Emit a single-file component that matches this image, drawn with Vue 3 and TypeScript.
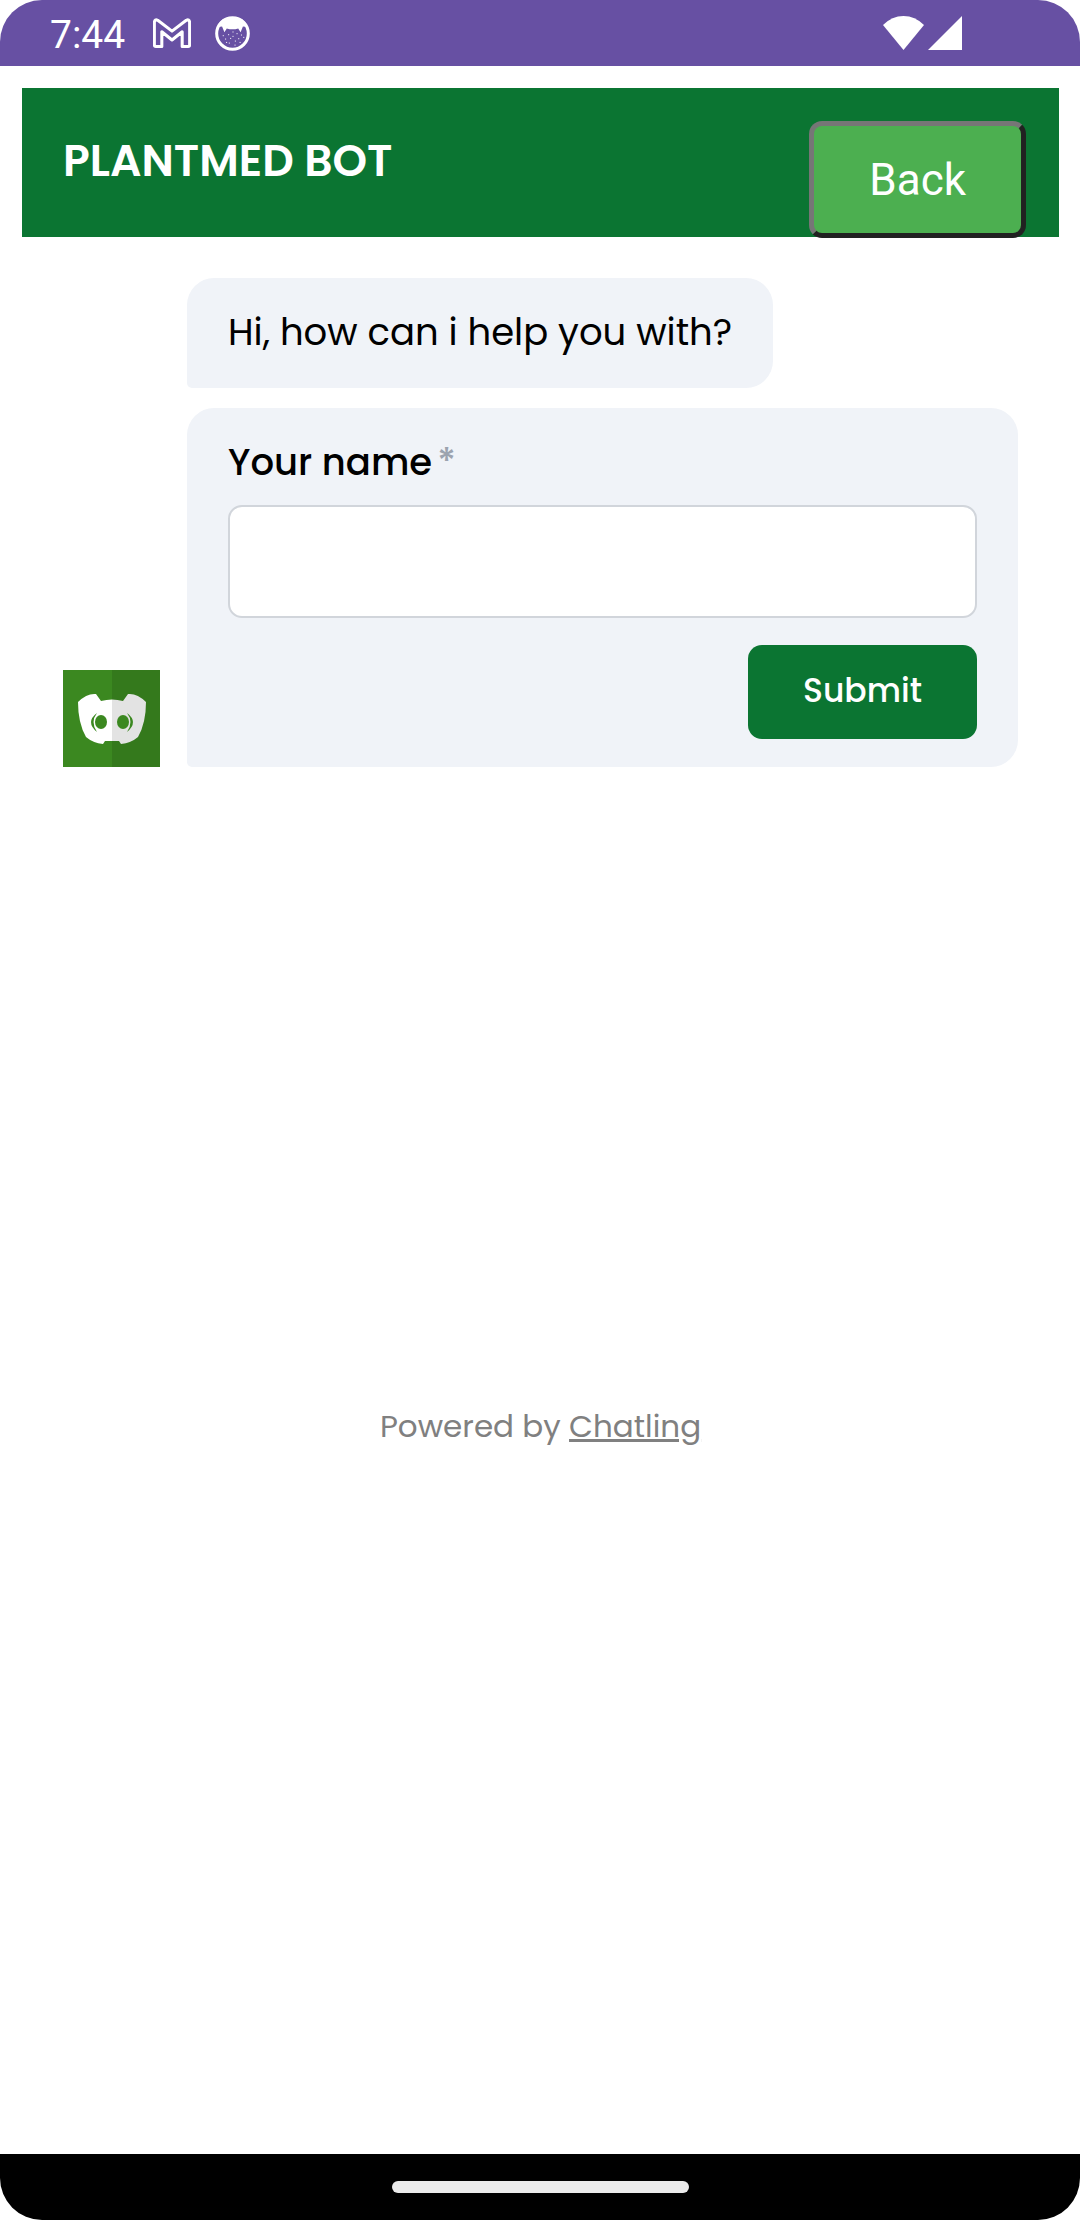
<script setup lang="ts">
import { ref } from 'vue'

const name = ref('')
const speckles: [number, number][] = [
  [668, 104], [675, 114], [684, 101], [690, 112], [697, 106], [709, 98], [714, 113],
  [722, 102], [729, 109], [704, 120], [686, 126], [697, 93], [678, 124], [718, 124], [703, 132],
]
</script>

<template>
  <div class="screen">
    <header class="status">
      <span class="time">7:44</span>
      <svg class="gmail" viewBox="458 54 112 87" aria-hidden="true">
        <path d="M462 133V66Q463 56 472 60L514 92L556 60Q565 56 566 66V133Q566 137 562 137H544V94L514 118L484 94V137H466Q462 137 462 133Z" fill="none" stroke="#fff" stroke-width="9" stroke-linejoin="round" />
      </svg>
      <svg class="cat" viewBox="645 47 104 104" aria-hidden="true">
        <circle cx="697" cy="99" r="47" fill="none" stroke="#fff" stroke-width="9" />
        <path d="M653 80Q660 50 697 50Q734 50 741 80L728 78L721 95L714 84Q697 89 680 84L673 95L666 78Z" fill="#fff" />
        <rect v-for="([x, y], i) in speckles" :key="i" :x="x" :y="y" width="3" height="3" fill="#fff" />
      </svg>
      <svg class="wifi" viewBox="0 0 41 34" aria-hidden="true">
        <path d="M0 9Q9 0 20.500 0Q32 0 41 9L20.500 34Z" fill="#fff" />
      </svg>
      <svg class="signal" viewBox="0 0 34 34" aria-hidden="true">
        <path d="M34 0V34H0Z" fill="#fff" />
      </svg>
    </header>

    <main class="page">
      <section class="chat">
        <div class="chat-head">
          <h1>PLANTMED BOT</h1>
          <button type="button" class="back">Back</button>
        </div>
        <div class="thread">
          <svg class="avatar" viewBox="0 0 97 97" role="img" aria-label="Bot">
            <path d="M0 0H97V97H0Z" fill="#3b8820" />
            <path d="M33 24Q24 23 15 32Q15 53 23 67Q30 73 40 74L42 71Q49 71 56 71L58 74Q68 73 75 67Q83 53 83 32Q74 23 65 24L60 31Q49 28 38 31Z" fill="#fff" />
            <path d="M49 0H97V97H49Z" fill="#000" fill-opacity=".11" />
            <g fill="#3b8820">
              <ellipse cx="38" cy="52" rx="6" ry="7" />
              <ellipse cx="60" cy="52" rx="6" ry="7" />
              <path d="M34 43Q22 52 34 62Q27 52 34 43ZM64 43Q76 52 64 62Q71 52 64 43Z" />
            </g>
          </svg>
          <div class="messages">
            <p class="bubble">Hi, how can i help you with?</p>
            <form class="bubble form" @submit.prevent>
              <label for="name">Your name<span class="star">*</span></label>
              <input id="name" v-model="name" type="text" required />
              <button type="submit" class="submit">Submit</button>
            </form>
          </div>
        </div>
        <p class="powered">Powered by <a href="#">Chatling</a></p>
      </section>
    </main>

    <footer class="nav"><span class="pill"></span></footer>
  </div>
</template>

<style>
body {
  margin: 0;
  background: #fff;
}
</style>

<style scoped>
* {
  box-sizing: border-box;
}
.screen {
  min-height: 100vh;
  display: flex;
  flex-direction: column;
  border-radius: 42px;
  overflow: hidden;
  background: #fff;
  font-family: Poppins, Inter, sans-serif;
  color: #000;
}
.status {
  height: 66px;
  padding: 0 118px 0 50px;
  display: flex;
  align-items: center;
  background: #6750a3;
  color: #fff;
}
.time {
  padding-top: 3px;
  font: 400 39px/60px Roboto, sans-serif;
}
.gmail {
  width: 38px;
  height: 30px;
  margin-left: 28px;
}
.cat {
  width: 35px;
  height: 35px;
  margin-left: 24px;
}
.wifi {
  width: 41px;
  height: 34px;
  margin-left: auto;
}
.signal {
  width: 34px;
  height: 34px;
  margin-left: 4px;
}
.page {
  flex: 1;
  padding: 22px 21px 0 22px;
}
.chat {
  min-height: 62vh;
  display: flex;
  flex-direction: column;
}
.chat-head {
  height: 149px;
  padding: 0 33px 0 41px;
  display: flex;
  align-items: center;
  justify-content: space-between;
  background: #0b7532;
  color: #fff;
}
h1 {
  margin: 0;
  padding-bottom: 4px;
  font-size: 44px;
  line-height: 64px;
  font-weight: 600;
}
.back {
  align-self: flex-start;
  flex: none;
  height: 117px;
  margin-top: 33px;
  padding: 0 55px;
  border: 5px solid;
  border-color: #767676 #212121 #212121 #767676;
  border-radius: 13px;
  background: #4caf50;
  color: #fff;
  font: 400 44px/64px Roboto, sans-serif;
}
.thread {
  display: flex;
  align-items: flex-end;
  gap: 27px;
  padding: 41px 41px 0;
}
.avatar {
  flex: none;
  width: 97px;
  height: 97px;
}
.messages {
  flex: 1;
  display: flex;
  flex-direction: column;
  align-items: flex-start;
  gap: 20px;
}
.bubble {
  margin: 0;
  padding: 26px 41px 28px;
  border-radius: 27px 27px 27px 5px;
  background: #f0f3f8;
  font-size: 37px;
  line-height: 56px;
}
.form {
  align-self: stretch;
  display: flex;
  flex-direction: column;
}
label {
  font-weight: 500;
}
.star {
  margin-left: 5px;
  color: #9ca3af;
}
input {
  width: 100%;
  height: 113px;
  margin: 15px 0 27px;
  padding: 0 27px;
  border: 2px solid #d1d5db;
  border-radius: 14px;
  background: #fff;
  font: inherit;
}
.submit {
  align-self: flex-end;
  height: 94px;
  padding: 0 55px 2px;
  border: 0;
  border-radius: 14px;
  background: #0b7532;
  color: #fff;
  font: inherit;
  font-size: 33px;
  font-weight: 500;
}
.powered {
  margin: auto 0 0;
  padding-bottom: 14px;
  text-align: center;
  font-size: 31px;
  line-height: 48px;
  color: #808080;
}
.powered a {
  color: inherit;
  text-decoration-thickness: 3px;
}
.nav {
  height: 66px;
  display: flex;
  align-items: center;
  justify-content: center;
  background: #000;
}
.pill {
  width: 297px;
  height: 12px;
  border-radius: 6px;
  background: #ebebeb;
}
</style>
